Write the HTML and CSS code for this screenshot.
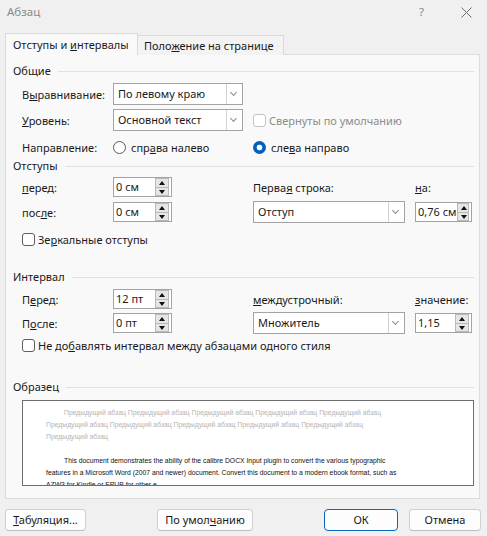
FILE: index.html
```html
<!DOCTYPE html>
<html lang="ru">
<head>
<meta charset="utf-8">
<title>Абзац</title>
<link rel="stylesheet" href="styles.css">
</head>
<body>
<div class="window">
  <div class="titlebar">
    <span class="title">Абзац</span>
    <span class="help">?</span>
    <svg class="close" width="11" height="11" viewBox="0 0 11 11"><path d="M0.5 0.5L10.5 10.5M10.5 0.5L0.5 10.5" stroke="#6f6f6f" stroke-width="1" fill="none"/></svg>
  </div>
  <div class="tabs">
    <div class="tab active">Отступы и <u>и</u>нтервалы</div>
    <div class="tab">Поло<u>ж</u>ение на странице</div>
  </div>
  <div class="panel">
    <div class="group-head h1"><span>Общие</span></div>
    <div class="row r1">
      <span>В<u>ы</u>равнивание:</span>
      <div class="select w130"><span class="val">По левому краю</span><span class="arrow"></span></div>
    </div>
    <div class="row r2">
      <span><u>У</u>ровень:</span>
      <div class="select w130"><span class="val">Основной текст</span><span class="arrow"></span></div>
      <label class="check disabled"><span class="box"></span>Свернуты по умолчанию</label>
    </div>
    <div class="row r3">
      <span>Направление:</span>
      <label class="radio"><span class="dot"></span>спр<u>а</u>ва налево</label>
      <label class="radio on"><span class="dot"></span>сле<u>в</u>а направо</label>
    </div>
    <div class="group-head h2"><span>Отступы</span></div>
    <div class="row r4">
      <span><u>п</u>еред:</span>
      <div class="spin w59"><span class="val">0 см</span><span class="btns"><i class="up"></i><i class="down"></i></span></div>
      <span>Перва<u>я</u> строка:</span>
      <span><u>н</u>а:</span>
    </div>
    <div class="row r5">
      <span>пос<u>л</u>е:</span>
      <div class="spin w59"><span class="val">0 см</span><span class="btns"><i class="up"></i><i class="down"></i></span></div>
      <div class="select w152"><span class="val">Отступ</span><span class="arrow"></span></div>
      <div class="spin w57"><span class="val">0,76 см</span><span class="btns"><i class="up"></i><i class="down"></i></span></div>
    </div>
    <div class="row r6">
      <label class="check span-all"><span class="box"></span>Зе<u>р</u>кальные отступы</label>
    </div>
    <div class="group-head h3"><span>Интервал</span></div>
    <div class="row r7">
      <span>П<u>е</u>ред:</span>
      <div class="spin w59"><span class="val">12 пт</span><span class="btns"><i class="up"></i><i class="down"></i></span></div>
      <span><u>м</u>еждустрочный:</span>
      <span><u>з</u>начение:</span>
    </div>
    <div class="row r8">
      <span>П<u>о</u>сле:</span>
      <div class="spin w59"><span class="val">0 пт</span><span class="btns"><i class="up"></i><i class="down"></i></span></div>
      <div class="select w152"><span class="val">Множитель</span><span class="arrow"></span></div>
      <div class="spin w57"><span class="val">1,15</span><span class="btns"><i class="up"></i><i class="down"></i></span></div>
    </div>
    <div class="row r9">
      <label class="check span-all"><span class="box"></span>Не до<u>б</u>авлять интервал между абзацами одного стиля</label>
    </div>
    <div class="group-head h4"><span>Образец</span></div>
    <div class="preview">
      <p class="prev">Предыдущий абзац Предыдущий абзац Предыдущий абзац Предыдущий абзац Предыдущий абзац<br>Предыдущий абзац Предыдущий абзац Предыдущий абзац Предыдущий абзац Предыдущий абзац<br>Предыдущий абзац</p>
      <p class="cur">This document demonstrates the ability of the calibre DOCX Input plugin to convert the various typographic<br>features in a Microsoft Word (2007 and newer) document. Convert this document to a modern ebook format, such as<br>AZW3 for Kindle or EPUB for other e</p>
    </div>
  </div>
  <div class="footer">
    <button class="btn b-tab"><u>Т</u>абуляция...</button>
    <button class="btn b-def">По умол<u>ч</u>анию</button>
    <button class="btn b-ok">ОК</button>
    <button class="btn b-cancel">Отмена</button>
  </div>
</div>
</body>
</html>
```
FILE: styles.css
```css
html, body {
  margin: 0;
  padding: 0;
}
body {
  width: 487px;
  height: 536px;
  overflow: hidden;
  background: #f0f0f0;
  font-family: "Noto Sans", "Open Sans", sans-serif;
  font-size: 11px;
  color: #1a1a1a;
}
u {
  text-decoration: underline;
  text-underline-offset: 1px;
}
.titlebar {
  height: 33px;
  box-sizing: border-box;
  padding: 3px 0 0 7px;
  display: flex;
  align-items: flex-start;
  line-height: 18px;
  color: #8a8a8a;
}
.title { font-size: 11.5px; }
.help {
  margin-left: auto;
  margin-right: 37px;
  color: #8a8a8a;
  font-size: 11.5px;
}
.close {
  margin-top: 4px;
  margin-right: 15px;
}
.tabs {
  display: flex;
  align-items: flex-end;
  height: 22px;
  padding-left: 5px;
  margin-bottom: -1px;
  position: relative;
  z-index: 1;
}
.tab {
  box-sizing: border-box;
  line-height: 18px;
  white-space: nowrap;
}
.tab.active {
  width: 133px;
  height: 22px;
  padding: 2px 0 0 7px;
  background: #f9f9f9;
  border: 1px solid #dadada;
  border-bottom: none;
}
.tab:not(.active) {
  width: 146px;
  height: 20px;
  padding: 1px 0 0 6px;
  background: #f3f3f3;
  border: 1px solid #dadada;
  border-left: none;
  border-bottom: none;
}
.panel {
  margin-left: 5px;
  width: 475px;
  height: 445px;
  box-sizing: border-box;
  background: #f9f9f9;
  border: 1px solid #dcdcdc;
  padding: 0 5px 0 7px;
}
.group-head {
  height: 18px;
  display: flex;
  align-items: center;
  gap: 7px;
  line-height: 18px;
}
.group-head::after {
  content: "";
  flex: 1;
  height: 1px;
  background: #e1e1e1;
}
.h1 { margin-top: 7px; }
.h2 { margin-top: 1px; }
.h3 { margin-top: 21px; }
.h4 { margin-top: 25px; }

.row {
  display: grid;
  grid-template-columns: 91px 140px 162px 59px;
  align-items: center;
  padding-left: 9px;
  white-space: nowrap;
}
.r1 { margin-top: 3px; height: 22px; }
.r2 { margin-top: 4px; height: 22px; }
.r3 { margin-top: 7px; height: 18px; }
.r4 { margin-top: 2px; height: 20px; }
.r5 { margin-top: 4px; height: 22px; }
.r6 { margin-top: 8px; height: 16px; }
.r7 { margin-top: 3px; height: 20px; }
.r8 { margin-top: 3px; height: 22px; }
.r9 { margin-top: 3px; height: 16px; }
.span-all { grid-column: 1 / -1; }

.select {
  box-sizing: border-box;
  height: 22px;
  background: #fff;
  border: 1px solid #a3a3a3;
  display: flex;
  align-items: stretch;
}
.w130 { width: 130px; }
.w152 { width: 152px; }
.select .val {
  flex: 1;
  padding-left: 4px;
  line-height: 20px;
}
.select .arrow {
  width: 15px;
  border-left: 1px solid #d2d2d2;
  position: relative;
}
.select .arrow::after {
  content: "";
  position: absolute;
  left: 4px;
  top: 6px;
  width: 4px;
  height: 4px;
  border-right: 1px solid #8a8a8a;
  border-bottom: 1px solid #8a8a8a;
  transform: rotate(45deg);
}
.spin {
  box-sizing: border-box;
  height: 20px;
  background: #fff;
  border: 1px solid #a3a3a3;
  display: flex;
  align-items: center;
}
.w59 { width: 59px; }
.w57 { width: 57px; }
.spin .val {
  flex: 1;
  padding-left: 2px;
  line-height: 18px;
}
.spin .btns {
  display: flex;
  flex-direction: column;
  width: 14px;
  height: 18px;
  margin-right: 2px;
}
.spin .btns i {
  flex: 1;
  box-sizing: border-box;
  background: #e6e6e6;
  border: 1px solid #b9b9b9;
  position: relative;
}
.spin .btns i + i { border-top: none; }
.spin .btns i::after {
  content: "";
  position: absolute;
  left: 3px;
  width: 0;
  height: 0;
  border-left: 3.5px solid transparent;
  border-right: 3.5px solid transparent;
}
.spin .btns .up::after {
  top: 2px;
  border-bottom: 4px solid #111;
}
.spin .btns .down::after {
  top: 2px;
  border-top: 4px solid #111;
}

.radio, .check {
  display: flex;
  align-items: center;
}
.radio .dot {
  box-sizing: border-box;
  width: 13px;
  height: 13px;
  border-radius: 50%;
  border: 1px solid #5a5a5a;
  background: #fff;
  margin-right: 5px;
}
.radio.on .dot {
  border: none;
  background: radial-gradient(circle, #fff 0 2.6px, #0560b6 3.2px);
}
.check .box {
  box-sizing: border-box;
  width: 13px;
  height: 13px;
  border-radius: 3px;
  border: 1px solid #5e5e5e;
  background: #fff;
  margin-right: 3px;
}
.check.disabled { color: #8c8c8c; }
.check.disabled .box { border-color: #c3c3c3; }

.preview {
  margin: 4px 0 0 9px;
  width: 452px;
  height: 86px;
  box-sizing: border-box;
  background: #fff;
  border: 1px solid #6e6e6e;
  padding: 6px 0 0 23px;
  overflow: hidden;
  font-family: "Liberation Sans", sans-serif;
  font-size: 6.8px;
  line-height: 12px;
  white-space: nowrap;
}
.preview p {
  margin: 0;
  text-indent: 18px;
}
.preview .prev { color: #b4b4b4; }
.preview .cur { color: #111; margin-top: 12px; }

.footer {
  display: flex;
  padding: 10px 0 0 5px;
}
.btn {
  box-sizing: border-box;
  height: 22px;
  padding: 0;
  font-family: inherit;
  font-size: 11px;
  color: #1a1a1a;
  background: #fdfdfd;
  border: 1px solid #d0d0d0;
  border-bottom-color: #bdbdbd;
  border-radius: 4px;
  line-height: 18px;
}
.b-tab { width: 81px; }
.b-def { width: 96px; margin-left: 71px; }
.b-ok { width: 74px; margin-left: 71px; border: 1px solid #0a64c0; }
.b-cancel { width: 72px; margin-left: 11px; }
```
